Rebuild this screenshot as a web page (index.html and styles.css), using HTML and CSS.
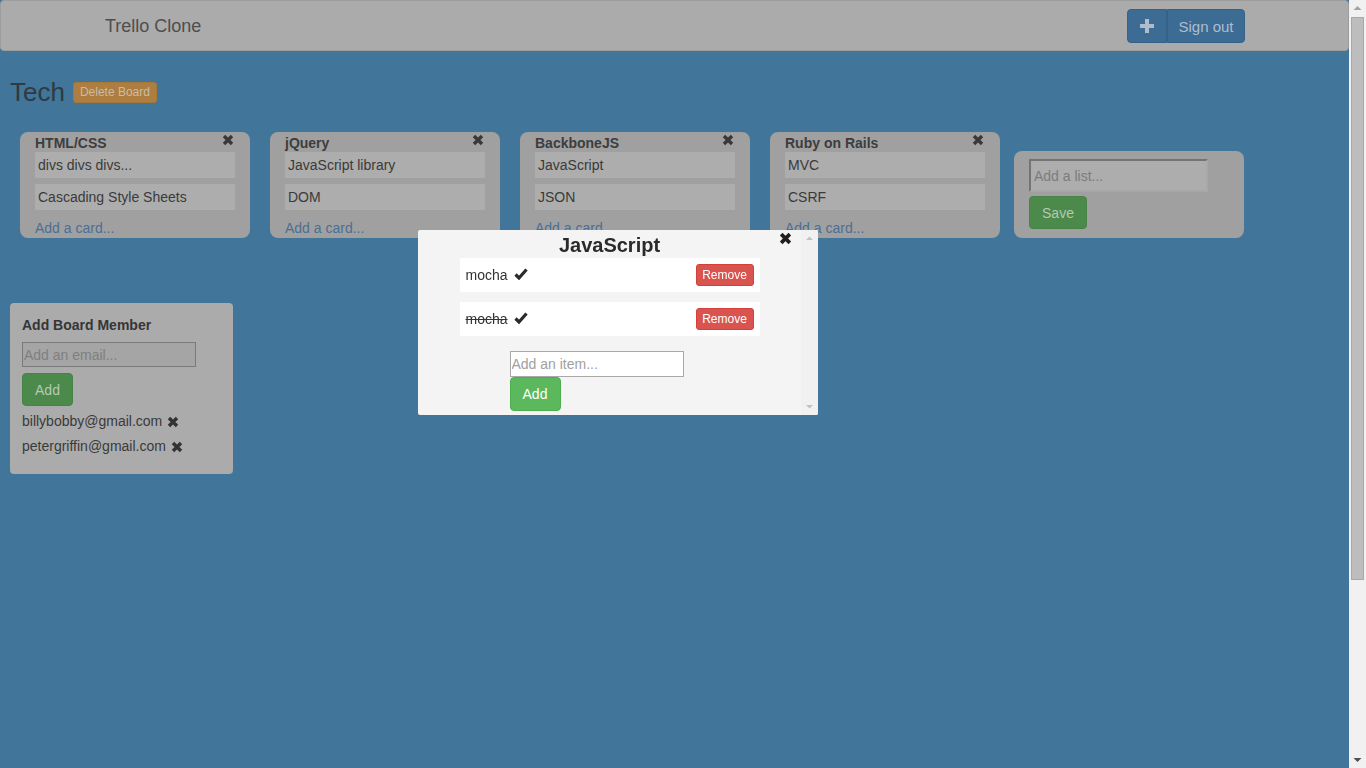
FILE: index.html
```html
<!DOCTYPE html>
<html>
<head>
<meta charset="utf-8">
<title>Trello Clone</title>
<link rel="stylesheet" href="styles.css">
</head>
<body>
<div class="page">
  <nav class="navbar">
    <div class="brand">Trello Clone</div>
    <div class="btn-group">
      <button class="btn btn-primary btn-icon" aria-label="New board">
        <svg width="14" height="14" viewBox="0 0 14 14"><path d="M5 0h4v5h5v4H9v5H5V9H0V5h5z" fill="currentColor"/></svg>
      </button>
      <button class="btn btn-primary btn-text">Sign out</button>
    </div>
  </nav>

  <div class="board-head">
    <h1 class="board-title">Tech</h1>
    <button class="btn-delete">Delete Board</button>
  </div>

  <div class="lists">
    <div class="list">
      <div class="list-head"><span class="list-title">HTML/CSS</span><span class="x-icon"><svg width="12" height="12" viewBox="0 0 12 12"><path d="M2 2L10 10M10 2L2 10" stroke="currentColor" stroke-width="3.4"/></svg></span></div>
      <div class="card">divs divs divs...</div>
      <div class="card">Cascading Style Sheets</div>
      <a class="add-card">Add a card...</a>
    </div>
    <div class="list">
      <div class="list-head"><span class="list-title">jQuery</span><span class="x-icon"><svg width="12" height="12" viewBox="0 0 12 12"><path d="M2 2L10 10M10 2L2 10" stroke="currentColor" stroke-width="3.4"/></svg></span></div>
      <div class="card">JavaScript library</div>
      <div class="card">DOM</div>
      <a class="add-card">Add a card...</a>
    </div>
    <div class="list">
      <div class="list-head"><span class="list-title">BackboneJS</span><span class="x-icon"><svg width="12" height="12" viewBox="0 0 12 12"><path d="M2 2L10 10M10 2L2 10" stroke="currentColor" stroke-width="3.4"/></svg></span></div>
      <div class="card">JavaScript</div>
      <div class="card">JSON</div>
      <a class="add-card">Add a card...</a>
    </div>
    <div class="list">
      <div class="list-head"><span class="list-title">Ruby on Rails</span><span class="x-icon"><svg width="12" height="12" viewBox="0 0 12 12"><path d="M2 2L10 10M10 2L2 10" stroke="currentColor" stroke-width="3.4"/></svg></span></div>
      <div class="card">MVC</div>
      <div class="card">CSRF</div>
      <a class="add-card">Add a card...</a>
    </div>
    <div class="add-list">
      <input class="list-input" type="text" placeholder="Add a list...">
      <button class="btn-green btn-save">Save</button>
    </div>
  </div>

  <div class="members">
    <h3 class="members-title">Add Board Member</h3>
    <input class="email-input" type="text" placeholder="Add an email...">
    <button class="btn-green btn-add">Add</button>
    <div class="member">billybobby@gmail.com <span class="x-icon dark"><svg width="12" height="12" viewBox="0 0 12 12"><path d="M2 2L10 10M10 2L2 10" stroke="currentColor" stroke-width="3.4"/></svg></span></div>
    <div class="member">petergriffin@gmail.com <span class="x-icon dark"><svg width="12" height="12" viewBox="0 0 12 12"><path d="M2 2L10 10M10 2L2 10" stroke="currentColor" stroke-width="3.4"/></svg></span></div>
  </div>
</div>

<div class="vscroll">
  <svg class="arrow" width="17" height="17" viewBox="0 0 17 17"><path d="M4.5 10h8L8.5 6z" fill="#a3a3a3"/></svg>
  <div class="track"><div class="thumb"></div></div>
  <svg class="arrow" width="17" height="17" viewBox="0 0 17 17"><path d="M4.5 7h8L8.5 11z" fill="#505050"/></svg>
</div>

<div class="modal">
  <div class="modal-inner">
    <span class="modal-close"><svg width="13" height="13" viewBox="0 0 12 12"><path d="M2 2L10 10M10 2L2 10" stroke="currentColor" stroke-width="3.4"/></svg></span>
    <h2 class="modal-title">JavaScript</h2>
    <div class="item">
      <span class="item-text">mocha</span>
      <svg class="check" width="14" height="12" viewBox="0 0 14 12"><path d="M1.5 6.5L5 10L12.5 1.5" stroke="currentColor" stroke-width="3.2" fill="none"/></svg>
      <button class="btn-remove">Remove</button>
    </div>
    <div class="item">
      <span class="item-text done">mocha</span>
      <svg class="check" width="14" height="12" viewBox="0 0 14 12"><path d="M1.5 6.5L5 10L12.5 1.5" stroke="currentColor" stroke-width="3.2" fill="none"/></svg>
      <button class="btn-remove">Remove</button>
    </div>
    <div class="item-form">
      <input class="item-input" type="text" placeholder="Add an item...">
      <button class="btn-add-item">Add</button>
    </div>
  </div>
  <div class="modal-scroll">
    <svg width="17" height="17" viewBox="0 0 17 17"><path d="M5 10h7L8.5 6.5z" fill="#c2c2c2"/></svg>
    <svg width="17" height="17" viewBox="0 0 17 17"><path d="M5 7h7L8.5 10.5z" fill="#c2c2c2"/></svg>
  </div>
</div>
</body>
</html>
```

FILE: styles.css
```css
html, body {
  margin: 0;
  padding: 0;
  height: 100%;
  overflow: hidden;
}
body {
  background: #41759a;
  font-family: "Liberation Sans", Arial, sans-serif;
  font-size: 14px;
  color: #3a3a3a;
  display: flex;
}
.page {
  flex: 1;
  min-width: 0;
}
button {
  font-family: "Liberation Sans", Arial, sans-serif;
  cursor: pointer;
}
input {
  font-family: "Liberation Sans", Arial, sans-serif;
  box-sizing: border-box;
}

/* page scrollbar */
.vscroll {
  width: 17px;
  height: 100vh;
  background: #f1f1f1;
  display: flex;
  flex-direction: column;
}
.vscroll .arrow {
  display: block;
  flex: none;
}
.track {
  flex: 1;
  padding: 0 2px;
}
.thumb {
  height: 563px;
  box-sizing: border-box;
  background: #bdbdbd;
  border: 1px solid #a8a8a8;
}

/* navbar */
.navbar {
  height: 51px;
  box-sizing: border-box;
  background: #ababab;
  border: 1px solid #9d9d9d;
  border-radius: 4px;
  display: flex;
  align-items: flex-start;
  justify-content: space-between;
  padding: 0 103px 0 104px;
}
.brand {
  font-size: 18px;
  color: #4e4e4e;
  line-height: 20px;
  margin-top: 15px;
}
.btn-group {
  display: flex;
  margin-top: 8px;
}
.btn {
  height: 34px;
  box-sizing: border-box;
  border: 1px solid #36618a;
  background: #3c6b94;
  color: #aebdcc;
  font-size: 14px;
  padding: 0;
  display: flex;
  align-items: center;
  justify-content: center;
}
.btn-icon {
  width: 40px;
  border-radius: 4px 0 0 4px;
}
.btn-text {
  width: 78px;
  border-radius: 0 4px 4px 0;
  margin-left: 0;
  font-size: 15px;
}

/* board head */
.board-head {
  display: flex;
  align-items: center;
  padding: 28px 10px 0 10px;
  height: 26px;
}
.board-title {
  margin: 0;
  font-size: 26px;
  font-weight: normal;
  color: #2f3a42;
  line-height: 26px;
}
.btn-delete {
  margin-left: 8px;
  height: 21px;
  width: 84px;
  padding: 0;
  border: 1px solid #a67737;
  background: #ac7e41;
  color: #cdbca3;
  font-size: 12px;
  border-radius: 3px;
}

/* lists */
.lists {
  display: flex;
  align-items: flex-start;
  gap: 20px;
  padding: 27px 20px 0 20px;
}
.list {
  width: 230px;
  box-sizing: border-box;
  background: #a0a0a0;
  border-radius: 8px;
  padding: 0 15px;
  height: 106px;
}
.list-head {
  display: flex;
  justify-content: space-between;
  align-items: center;
  height: 20px;
}
.list-title {
  font-weight: bold;
  color: #3d3d3d;
  font-size: 14px;
  line-height: 20px;
  padding-top: 1px;
}
.x-icon {
  color: #383838;
  display: inline-flex;
  margin-right: 1px;
}
.list .x-icon {
  margin-top: -4px;
}
.card {
  background: #adadad;
  height: 26px;
  line-height: 26px;
  padding: 0 3px;
  margin-bottom: 6px;
  color: #3a3a3a;
  font-size: 14px;
}
.add-card {
  display: block;
  margin-top: 8px;
  line-height: 20px;
  color: #4a6f94;
  font-size: 14px;
}
.add-list {
  width: 230px;
  box-sizing: border-box;
  background: #a0a0a0;
  border-radius: 8px;
  margin-left: -6px;
  margin-top: 19px;
  padding: 8px 15px 9px 15px;
  display: flex;
  flex-direction: column;
  align-items: flex-start;
  gap: 4px;
}
.list-input {
  width: 179px;
  height: 33px;
  background: #adadad;
  border: 2px solid #a8a8a8;
  border-top-color: #747474;
  border-left-color: #747474;
  font-size: 14px;
  padding: 0 3px;
  color: #3a3a3a;
}
.list-input::placeholder {
  color: #7c7c7c;
}
.btn-green {
  height: 33px;
  border: 1px solid #468446;
  background: #4b8a4b;
  color: #b5c9b5;
  border-radius: 4px;
  font-size: 14px;
  padding: 0;
}
.btn-save {
  width: 58px;
}

/* members */
.members {
  margin: 65px 0 0 10px;
  width: 223px;
  height: 171px;
  box-sizing: border-box;
  background: #ababab;
  border-radius: 4px;
  padding: 12px 12px 0 12px;
}
.members-title {
  margin: 0;
  font-size: 14px;
  font-weight: bold;
  color: #353535;
  line-height: 20px;
}
.email-input {
  display: block;
  margin-top: 7px;
  width: 174px;
  height: 25px;
  background: #a5a5a5;
  border: 1px solid #7a7a7a;
  font-size: 14px;
  padding: 0 1px;
}
.email-input::placeholder {
  color: #7f7f7f;
}
.btn-add {
  display: block;
  margin-top: 6px;
  width: 51px;
  font-size: 14px;
}
.member {
  line-height: 25px;
  font-size: 14px;
  color: #3a3a3a;
  display: flex;
  align-items: center;
  gap: 5px;
}
.members .btn-add + .member {
  margin-top: 3px;
}
.x-icon.dark {
  color: #333;
}

/* modal (overlays the board) */
.modal {
  position: fixed;
  left: 418px;
  top: 230px;
  width: 400px;
  height: 185px;
  background: #f4f4f4;
  overflow: hidden;
  border-radius: 2px;
  display: flex;
}
.modal-inner {
  position: relative;
  width: 383px;
  flex: none;
  padding-top: 4px;
}
.modal-scroll {
  width: 17px;
  background: #f1f1f1;
  display: flex;
  flex-direction: column;
  justify-content: space-between;
}
.modal-scroll svg {
  display: block;
}
.modal-close {
  position: absolute;
  right: 9px;
  top: 2px;
  color: #1f1f1f;
  display: inline-flex;
}
.modal-title {
  margin: 0;
  text-align: center;
  font-size: 20px;
  font-weight: bold;
  color: #2a2a2a;
  line-height: 22px;
  margin-bottom: 2px;
}
.item {
  width: 300px;
  height: 34px;
  margin: 0 auto 10px auto;
  background: #fff;
  display: flex;
  align-items: center;
  padding: 0 6px;
  box-sizing: border-box;
}
.item-text {
  font-size: 14px;
  color: #333;
}
.item-text.done {
  text-decoration: line-through;
}
.check {
  color: #2b2b2b;
  margin-left: 6px;
  margin-top: -2px;
}
.btn-remove {
  margin-left: auto;
  height: 22px;
  width: 58px;
  padding: 0;
  border: 1px solid #d43f3a;
  background: #d9534f;
  color: #fff;
  font-size: 12px;
  border-radius: 3px;
}
.item-form {
  width: 200px;
  margin: 15px auto 0 auto;
  display: flex;
  flex-direction: column;
  align-items: flex-start;
}
.item-input {
  width: 174px;
  height: 26px;
  background: #fff;
  border: 1px solid #a9a9a9;
  font-size: 14px;
  padding: 0 1px;
}
.item-input::placeholder {
  color: #a0a0a0;
}
.btn-add-item {
  width: 51px;
  height: 34px;
  border: 1px solid #4cae4c;
  background: #5cb85c;
  color: #fff;
  border-radius: 4px;
  font-size: 14px;
  padding: 0;
}
```
